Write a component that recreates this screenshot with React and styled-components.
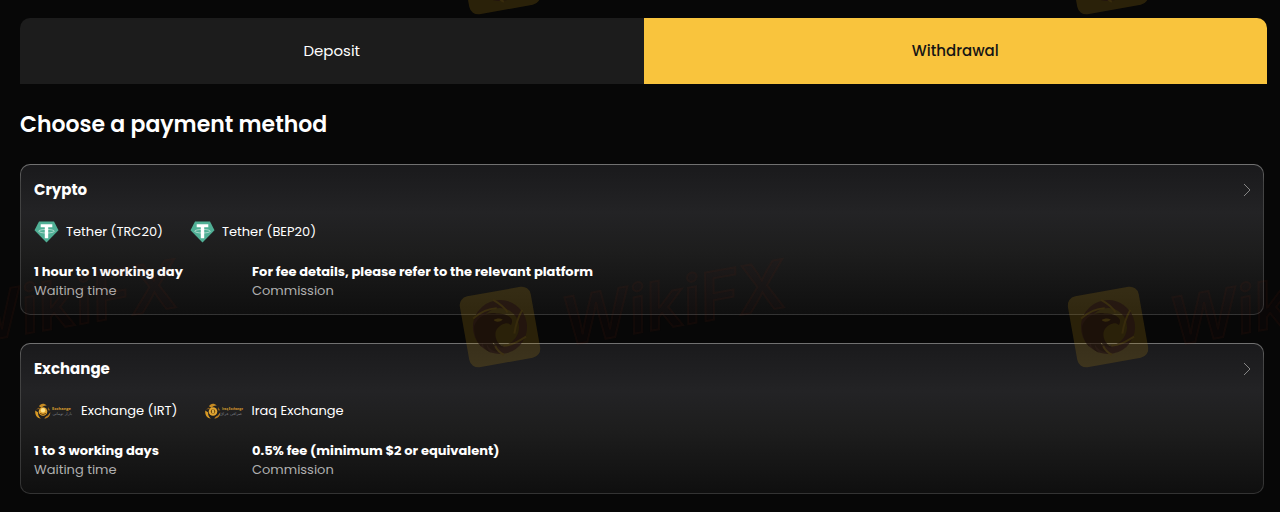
import { useState } from 'react';
import styled, { createGlobalStyle } from 'styled-components';

const GlobalStyle = createGlobalStyle`
  * {
    box-sizing: border-box;
  }

  body {
    margin: 0;
    background: #070707;
    color: #fff;
    font-family: Poppins, Inter, "Open Sans", sans-serif;
  }

  button {
    font: inherit;
    border: 0;
    cursor: pointer;
  }
`;

const Page = styled.main`
  position: relative;
  min-height: 100vh;
  padding: 18px 13px 18px 20px;
  overflow: hidden;
`;

const Tabs = styled.div`
  display: grid;
  grid-template-columns: 1fr 1fr;
  border-radius: 10px 10px 0 0;
  overflow: hidden;
`;

const Tab = styled.button`
  height: 66px;
  padding: 0 0 2px;
  font-size: 15px;
  font-weight: ${props => (props.$active ? 500 : 400)};
  color: ${props => (props.$active ? '#151515' : '#fff')};
  background: ${props => (props.$active ? '#f9c43d' : '#1c1c1c')};
`;

const Heading = styled.h1`
  margin: 24px 0 22px;
  font-size: 22px;
  line-height: 34px;
  font-weight: 600;
`;

const MethodList = styled.div`
  display: flex;
  flex-direction: column;
  gap: 28px;
  margin-right: 3px;
`;

const Card = styled.article`
  padding: 13px 11px 14px 13px;
  border: 1px solid transparent;
  border-radius: 10px;
  background:
    linear-gradient(#1a1a1c, #232325 32%, #1d1d1d 58%, #0f0f0f) padding-box,
    linear-gradient(#727272, #454545 12%, #333) border-box;
`;

const CardHeader = styled.header`
  display: flex;
  align-items: center;
  justify-content: space-between;
`;

const CardTitle = styled.h2`
  margin: 0;
  font-size: 15px;
  line-height: 24px;
  font-weight: 700;
`;

const OpenButton = styled.button`
  display: flex;
  padding: 0;
  color: #858585;
  background: none;
`;

const Options = styled.ul`
  display: flex;
  gap: 27px;
  margin: 18px 0;
  padding: 0;
  list-style: none;
`;

const Option = styled.li`
  display: flex;
  align-items: center;
  gap: 7px;
  font-size: 13px;
  line-height: 24px;
`;

const Details = styled.dl`
  display: grid;
  grid-template-columns: 218px 1fr;
  margin: 0;
`;

const Detail = styled.div`
  display: flex;
  flex-direction: column-reverse;
  font-size: 13px;
  line-height: 19px;
`;

const DetailLabel = styled.dt`
  color: #b0b0b0;
`;

const DetailValue = styled.dd`
  margin: 0;
  font-weight: 700;
`;

const WatermarkLayer = styled.div`
  position: absolute;
  top: -203px;
  left: -208px;
  display: grid;
  grid-template-columns: repeat(3, 608px);
  grid-auto-rows: 353px;
  pointer-events: none;
`;

const TetherIcon = () => (
  <svg width="25" height="22" viewBox="0 0 25 22" aria-hidden="true">
    <path d="M5 .5h15l4.5 8.8L12.5 21.5.5 9.3z" fill="#50af95" />
    <path d="M6.7 3.2h11.6v3.1h-4.1v11h-3.4v-11H6.7z" fill="#fff" />
    <ellipse cx="12.5" cy="10.2" rx="7.8" ry="1.8" fill="none" stroke="#fff" strokeWidth=".5" />
  </svg>
);

const ExchangeIcon = ({ title, subtitle, coin }) => (
  <svg width="40" height="18" viewBox="0 0 40 18" aria-hidden="true">
    <path d="M5 4.300C6.400 1.300 10 .8 12.800 3.500 10.500 3.300 8.500 4.300 7.500 5.900z" fill="#c58a22" />
    <path d="M1.300 8.500C.7 12.500 2.800 16.200 6.800 16.500 4.800 14.900 3.800 12.700 4.200 10.500z" fill="#d99a25" />
    <path d="M16.300 10.200C16.500 13.500 14 16.600 10.300 16.600 11.200 14.900 12.200 14.300 13.800 13.500z" fill="#b87b1e" />
    <path d="M2 7.500 5 5.500 5.800 7M14 5l2.300 3.500-2.500-.3" fill="#8d5d18" />
    <circle cx="9" cy="9.500" r="4.300" fill="#e2a52f" />
    <circle cx="9" cy={coin ? 9.5 : 8.3} r="2.200" fill={coin ? '#70470d' : '#ffe189'} />
    {coin
      ? <path d="M10 8.300H8.500v1.200h1.200v1.200H8M9 7.700v3.600" fill="none" stroke="#ffcf58" strokeWidth=".7" />
      : <path d="M6 11.500q3 2 6 0" fill="none" stroke="#71450c" />}
    <text x="18" y="8" fontFamily="Open Sans, sans-serif" fontSize={coin ? 3 : 4} fontWeight="700" fill="#d89d2e">{title}</text>
    <text x="38" y="13" fontFamily="DejaVu Sans, sans-serif" fontSize="4" textAnchor="end" fill="#7a7e85">{subtitle}</text>
  </svg>
);

const ChevronIcon = () => (
  <svg width="10" height="14" viewBox="0 0 10 14" aria-hidden="true">
    <path d="M2 1l6 6-6 6" fill="none" stroke="currentColor" />
  </svg>
);

const Watermark = ({ label }) => (
  <svg width="608" height="353" viewBox="0 0 608 353" aria-hidden="true">
    <g transform="translate(100 177) rotate(-10)">
      <rect x="-36" y="-36" width="72" height="72" rx="9" fill="#b88c15" opacity=".2" />
      <g opacity=".6">
        <circle r="23" fill="none" stroke="#1f0e12" strokeWidth="8" />
        <path
          d="M-25-6C-19-15-9-17-1-14 5-13 11-11 13-5 13-3 12-1 11 0 9-3 6-3 2-2-3 0-6 3-6 9-6 14-3 18 0 21-5 20-8 17-10 13-10 18-8 22-5 25-11 23-15 19-16 14-17 18-15 22-13 24-18 21-20 17-20 12L-22 16C-26 10-27 2-25-6z"
          fill="#140709"
        />
        <path d="M-5-8C-2-9 1-9 4-7 1-5-3-5-5-8z" fill="#44350f" />
        <path
          d="M-2-28C4-23 8-19 10-13M25-13C20-7 16 0 13 9M24 14C14 18 8 20 0 19M-1 28C-5 25-7 22-8 18M-25-13C-17-18-8-20 0-19"
          fill="none"
          stroke="#40320f"
          strokeWidth="2"
        />
      </g>
      {label && (
        <text
          x="62"
          y="30"
          fontFamily="Inter, sans-serif"
          fontSize="66"
          fontStyle="italic"
          fontWeight="600"
          fill="#7b2018"
          fillOpacity=".03"
          stroke="#7b2918"
          strokeOpacity=".09"
          strokeWidth="2"
        >
          {label}
        </text>
      )}
    </g>
  </svg>
);

const methods = [
  {
    title: 'Crypto',
    options: [
      { name: 'Tether (TRC20)', icon: <TetherIcon /> },
      { name: 'Tether (BEP20)', icon: <TetherIcon /> },
    ],
    time: '1 hour to 1 working day',
    commission: 'For fee details, please refer to the relevant platform',
  },
  {
    title: 'Exchange',
    options: [
      { name: 'Exchange (IRT)', icon: <ExchangeIcon title="Exchange" subtitle="بازار تومانی" /> },
      { name: 'Iraq Exchange', icon: <ExchangeIcon title="Iraq Exchange" subtitle="صرافی عراق" coin /> },
    ],
    time: '1 to 3 working days',
    commission: '0.5% fee (minimum $2 or equivalent)',
  },
];

const watermarks = ['', '', '', 'WikiFX', 'WikiFX', 'WikiFX'];

const PaymentCard = ({ method }) => (
  <Card>
    <CardHeader>
      <CardTitle>{method.title}</CardTitle>
      <OpenButton type="button" aria-label={`Open ${method.title}`}>
        <ChevronIcon />
      </OpenButton>
    </CardHeader>
    <Options>
      {method.options.map(option => (
        <Option key={option.name}>
          {option.icon}
          {option.name}
        </Option>
      ))}
    </Options>
    <Details>
      <Detail>
        <DetailLabel>Waiting time</DetailLabel>
        <DetailValue>{method.time}</DetailValue>
      </Detail>
      <Detail>
        <DetailLabel>Commission</DetailLabel>
        <DetailValue>{method.commission}</DetailValue>
      </Detail>
    </Details>
  </Card>
);

const App = () => {
  const [tab, setTab] = useState('Withdrawal');

  return (
    <>
      <GlobalStyle />
      <Page>
        <Tabs role="tablist">
          {['Deposit', 'Withdrawal'].map(name => (
            <Tab
              key={name}
              type="button"
              role="tab"
              aria-selected={tab === name}
              $active={tab === name}
              onClick={() => setTab(name)}
            >
              {name}
            </Tab>
          ))}
        </Tabs>
        <Heading>Choose a payment method</Heading>
        <MethodList>
          {methods.map(method => (
            <PaymentCard key={method.title} method={method} />
          ))}
        </MethodList>
        <WatermarkLayer>
          {watermarks.map((label, i) => (
            <Watermark key={i} label={label} />
          ))}
        </WatermarkLayer>
      </Page>
    </>
  );
};

export default App;
